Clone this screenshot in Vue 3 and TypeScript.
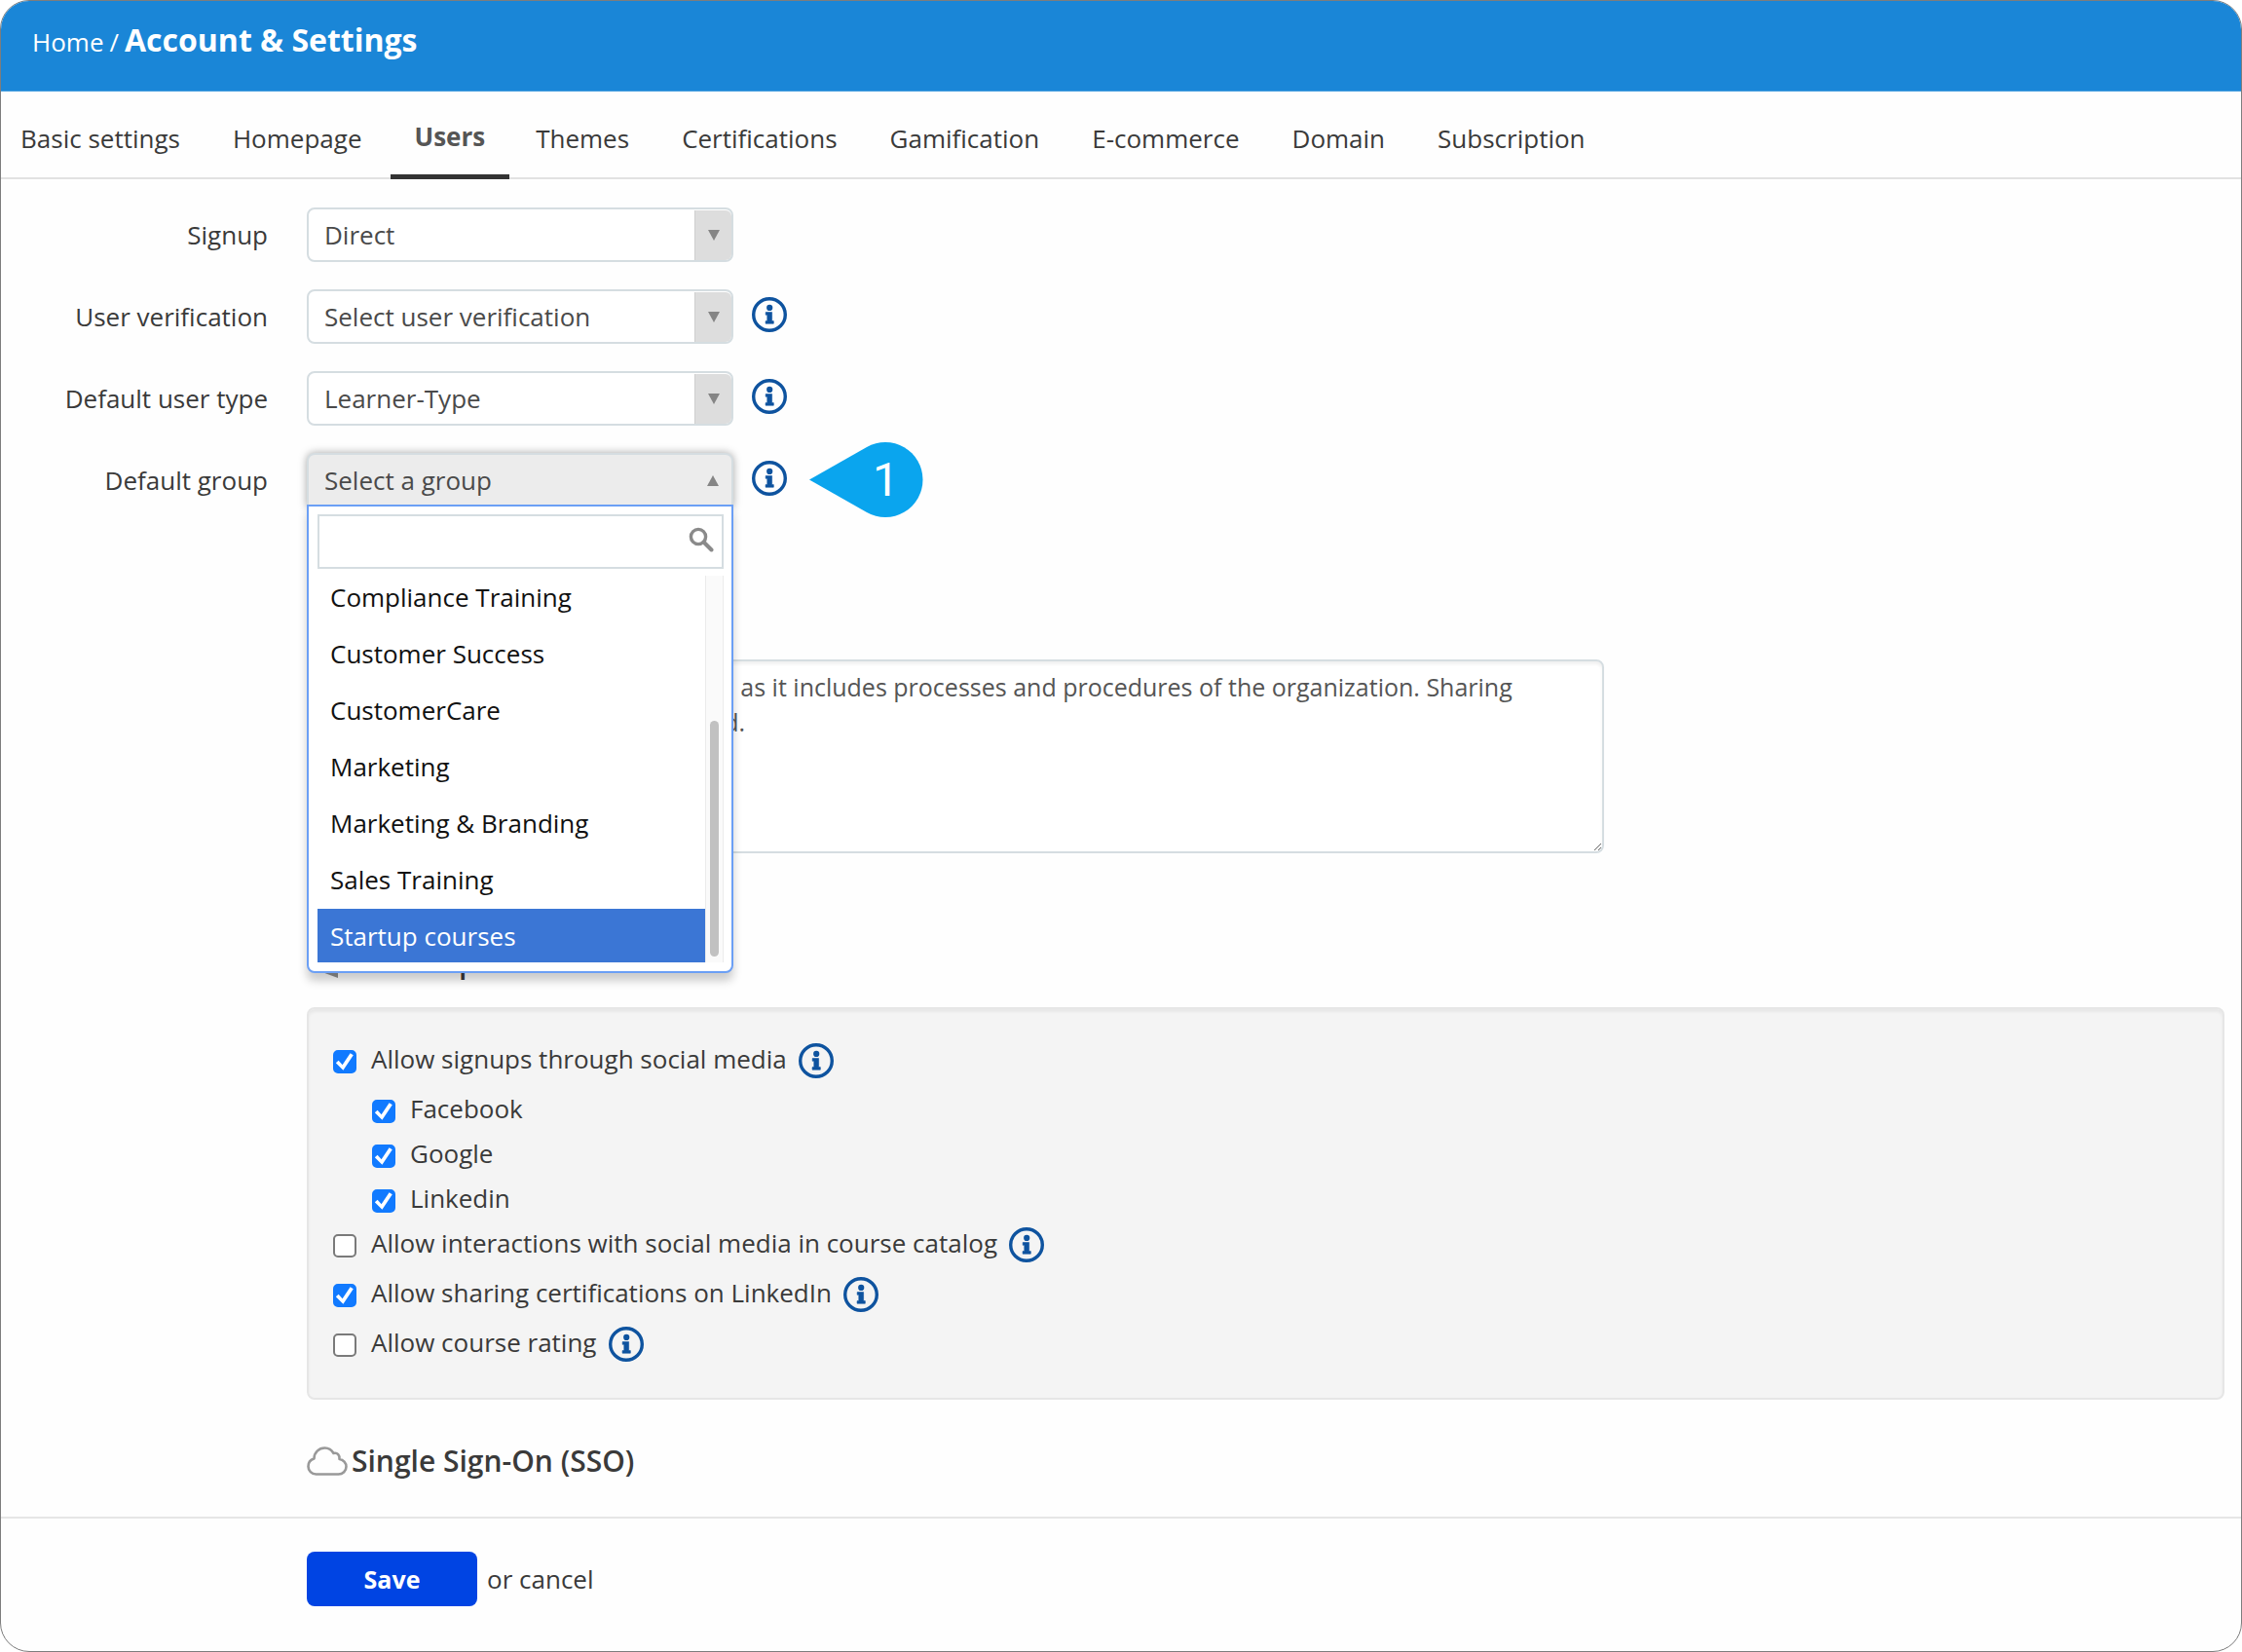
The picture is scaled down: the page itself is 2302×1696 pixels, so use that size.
<script setup lang="ts">
import { ref } from 'vue'

interface Tab { id: string; label: string }
interface Field { id: string; label: string; value: string; info: boolean }
interface Option { id: string; label: string; checked: boolean; nested?: boolean; info?: boolean }

const tabs: Tab[] = [
  { id: 'basic', label: 'Basic settings' },
  { id: 'homepage', label: 'Homepage' },
  { id: 'users', label: 'Users' },
  { id: 'themes', label: 'Themes' },
  { id: 'certifications', label: 'Certifications' },
  { id: 'gamification', label: 'Gamification' },
  { id: 'ecommerce', label: 'E-commerce' },
  { id: 'domain', label: 'Domain' },
  { id: 'subscription', label: 'Subscription' },
]
const activeTab = ref('users')

const fields: Field[] = [
  { id: 'signup', label: 'Signup', value: 'Direct', info: false },
  { id: 'verification', label: 'User verification', value: 'Select user verification', info: true },
  { id: 'user-type', label: 'Default user type', value: 'Learner-Type', info: true },
]

const groups: string[] = [
  'Compliance Training',
  'Customer Success',
  'CustomerCare',
  'Marketing',
  'Marketing & Branding',
  'Sales Training',
  'Startup courses',
]
const activeGroup = ref('Startup courses')
const search = ref('')

const terms = ref(
  'All information is strictly confidential as it includes processes and procedures of the organization. Sharing information with others is prohibited.',
)

const options = ref<Option[]>([
  { id: 'social', label: 'Allow signups through social media', checked: true, info: true },
  { id: 'facebook', label: 'Facebook', checked: true, nested: true },
  { id: 'google', label: 'Google', checked: true, nested: true },
  { id: 'linkedin', label: 'Linkedin', checked: true, nested: true },
  { id: 'catalog', label: 'Allow interactions with social media in course catalog', checked: false, info: true },
  { id: 'sharing', label: 'Allow sharing certifications on LinkedIn', checked: true, info: true },
  { id: 'rating', label: 'Allow course rating', checked: false, info: true },
])
</script>

<template>
  <svg class="defs" aria-hidden="true">
    <symbol id="icon-info" viewBox="0 0 36 36">
      <circle cx="18" cy="18" r="16.3" fill="none" stroke="#0e539f" stroke-width="3.4" />
      <circle cx="18.2" cy="10.9" r="3.1" fill="#0e539f" />
      <path d="M14.2 15.6h6.4v9h1.7v2.6h-8.2v-2.6h1.7v-6.3h-1.6z" fill="#0e539f" stroke="#0e539f" stroke-width=".6" stroke-linejoin="round" />
    </symbol>
  </svg>

  <div class="window">
    <header class="bar">
      <a class="crumb" href="#">Home</a>
      <span class="crumb">/</span>
      <h1>Account &amp; Settings</h1>
    </header>

    <nav class="tabs">
      <a
        v-for="tab in tabs"
        :key="tab.id"
        href="#"
        class="tab"
        :class="{ active: tab.id === activeTab }"
        @click.prevent="activeTab = tab.id"
      >{{ tab.label }}</a>
    </nav>

    <main class="form">
      <div v-for="field in fields" :key="field.id" class="row">
        <label class="row-label" :for="field.id">{{ field.label }}</label>
        <div class="picker">
          <select :id="field.id">
            <option>{{ field.value }}</option>
          </select>
          <span class="picker-arrow"><svg width="12" height="11" viewBox="0 0 12 11"><path d="M0 0h12L6 11z" fill="#858585" /></svg></span>
        </div>
        <svg v-if="field.info" class="info"><use href="#icon-info" /></svg>
      </div>

      <div class="row">
        <label class="row-label" for="group">Default group</label>
        <div class="picker">
          <button id="group" type="button" class="picker-open" aria-haspopup="listbox" aria-expanded="true">
            Select a group
            <svg width="12" height="11" viewBox="0 0 12 11"><path d="M0 11h12L6 0z" fill="#858585" /></svg>
          </button>
          <div class="dropdown">
            <div class="search">
              <input v-model="search" type="text" aria-label="Search groups">
              <svg width="26" height="26" viewBox="0 0 26 26" fill="none" stroke="#8a8a8a">
                <circle cx="10" cy="10" r="7.6" stroke-width="3.4" />
                <path d="M15.5 15.5l8 8" stroke-width="4" stroke-linecap="round" />
              </svg>
            </div>
            <div class="results">
              <ul role="listbox">
                <li
                  v-for="group in groups"
                  :key="group"
                  role="option"
                  :aria-selected="group === activeGroup"
                  :class="{ active: group === activeGroup }"
                  @click="activeGroup = group"
                >{{ group }}</li>
              </ul>
              <div class="track"><div class="thumb" /></div>
            </div>
          </div>
        </div>
        <div class="after">
          <svg class="info"><use href="#icon-info" /></svg>
          <div class="callout">
            <svg width="117" height="78" viewBox="0 0 117 78"><path d="M0 38.5L59 5A38.5 38.5 0 1 1 59 72z" fill="#0aa5ee" /></svg>
            <span>1</span>
          </div>
        </div>
      </div>

      <div class="content">
        <textarea v-model="terms" aria-label="Terms of service" />

        <h2 class="social-title">
          <svg width="42" height="32" viewBox="0 0 42 32"><path d="M2 12v9l30 11V0z" fill="#8f8f8f" /></svg>
          Social options
        </h2>

        <section class="panel">
          <div
            v-for="option in options"
            :key="option.id"
            class="option"
            :class="{ nested: option.nested, spaced: option.info }"
          >
            <input :id="option.id" v-model="option.checked" type="checkbox">
            <label :for="option.id">{{ option.label }}</label>
            <svg v-if="option.info" class="info"><use href="#icon-info" /></svg>
          </div>
        </section>

        <h2>
          <svg width="42" height="30" viewBox="0 0 42 30" fill="none" stroke="#999" stroke-width="2.6" stroke-linejoin="round">
            <path d="M9.500 28.500C5 28.500 1.500 25 1.500 20.500C1.500 16.500 4 13.500 7.500 12.500C7.500 6 12.500 1.500 18.500 1.500C22.500 1.500 25.500 3.500 27.500 7C31.500 6 34 9 33.500 13C37.500 13.500 40.500 16.800 40.500 20.800C40.500 25 37 28.500 32.500 28.500Z" />
          </svg>
          Single Sign-On (SSO)
        </h2>
      </div>
    </main>

    <footer class="actions">
      <button type="button" class="save">Save</button>
      <span>or <a href="#">cancel</a></span>
    </footer>
  </div>
</template>

<style>
body {
  margin: 0;
  background: #fff;
}
</style>

<style scoped>
* {
  box-sizing: border-box;
}

.defs {
  position: absolute;
  width: 0;
  height: 0;
}

.window {
  display: flex;
  flex-direction: column;
  min-height: 100vh;
  border: 1px solid #7d7d7d;
  border-radius: 30px;
  overflow: hidden;
  background: #fefefe;
  color: #3a3a3a;
  font: 26px/36px "Open Sans", "Noto Sans", sans-serif;
}

a {
  color: inherit;
  text-decoration: none;
}

.bar {
  display: flex;
  align-items: baseline;
  gap: 6px;
  height: 93px;
  padding: 17px 32px 0;
  border-bottom: 1px solid #4aa0df;
  background: #1a86d7;
  color: #fff;
}

h1 {
  margin: 0;
  font-size: 32px;
  line-height: 46px;
  font-weight: 700;
}

.tabs {
  display: flex;
  height: 90px;
  border-bottom: 2px solid #e2e2e2;
}

.tab {
  height: 90px;
  padding: 30px 27px 0;
}

.tab:first-child {
  padding-left: 20px;
}

.tab.active {
  margin-left: 2px;
  padding: 28px 25px 0;
  border-bottom: 5px solid #333;
  color: #555;
  font-weight: 700;
}

.form {
  display: flex;
  flex-direction: column;
  gap: 28px;
  padding: 29px 17px 0 0;
}

.row {
  display: flex;
  align-items: center;
}

.row-label {
  width: 274px;
  margin-right: 40px;
  text-align: right;
}

.info {
  flex: none;
  width: 36px;
  height: 36px;
}

.row .info {
  margin: 0 0 4px 19px;
}

.picker {
  position: relative;
  width: 438px;
  height: 56px;
}

select,
.picker-open {
  width: 100%;
  height: 100%;
  padding: 0 50px 0 16px;
  border: 2px solid #d5dde1;
  border-radius: 8px;
  background: #fff;
  color: #4a4a4a;
  font: inherit;
  appearance: none;
}

.picker-arrow {
  position: absolute;
  top: 3px;
  right: 2px;
  bottom: 2px;
  display: flex;
  align-items: center;
  justify-content: center;
  width: 38px;
  border-left: 1px solid #cfcfcf;
  border-radius: 0 6px 6px 0;
  background: #ddd;
  pointer-events: none;
}

.picker-open {
  display: flex;
  align-items: center;
  justify-content: space-between;
  padding-right: 13px;
  border-radius: 8px 8px 0 0;
  background: #ececec;
  box-shadow: 0 0 8px rgba(0, 0, 0, 0.35);
  text-align: left;
}

.dropdown {
  position: absolute;
  z-index: 2;
  top: 53px;
  left: 0;
  right: 0;
  padding: 8px 8px 9px 9px;
  border: 2px solid #6b9ff5;
  border-radius: 0 0 8px 8px;
  background: #fff;
  box-shadow: 0 8px 10px rgba(0, 0, 0, 0.2);
}

.search {
  display: flex;
  align-items: center;
  height: 56px;
  padding: 0 8px 4px 0;
  border: 2px solid #d5dde1;
}

.search input {
  flex: 1;
  min-width: 0;
  height: 100%;
  padding: 0 10px;
  border: 0;
  outline: 0;
  background: transparent;
  font: inherit;
}

.results {
  display: flex;
  height: 397px;
  margin-top: 7px;
}

ul {
  display: flex;
  flex: 1;
  flex-direction: column;
  justify-content: flex-end;
  gap: 3px;
  margin: 0;
  padding: 0;
  overflow: hidden;
  list-style: none;
}

li {
  flex: none;
  height: 55px;
  padding: 0 13px;
  color: #111;
  line-height: 56px;
}

li.active {
  background: #3b76d5;
  color: #fff;
}

.track {
  width: 19px;
  padding: 149px 4px 6px;
  border: solid #ebebeb;
  border-width: 0 1px;
  background: #fafafa;
}

.thumb {
  height: 100%;
  border-radius: 5px;
  background: #c1c1c1;
}

.after {
  position: relative;
  display: flex;
}

.callout {
  position: absolute;
  top: -19px;
  left: 78px;
  width: 117px;
  height: 78px;
}

.callout svg {
  display: block;
}

.callout span {
  position: absolute;
  inset: 0 0 0 40px;
  color: #fff;
  font: 48px/78px Roboto, sans-serif;
  text-align: center;
}

.content {
  display: flex;
  flex-direction: column;
  padding: 128px 0 0 314px;
}

textarea {
  width: 68%;
  max-width: 1332px;
  height: 199px;
  padding: 8px 12px;
  border: 2px solid #d5dde1;
  border-radius: 8px;
  background: #fff;
  box-shadow: inset 0 3px 3px rgba(0, 0, 0, 0.06);
  color: #555;
  font: 500 25px/36px "Open Sans", "Noto Sans", sans-serif;
}

h2 {
  display: flex;
  align-items: center;
  gap: 4px;
  margin: 0;
  font-size: 30px;
  line-height: 42px;
  font-weight: 600;
}

.social-title {
  margin: 91px 0 25px;
}

.panel {
  margin-bottom: 42px;
  padding: 28px 25px 29px;
  border: 2px solid #e6e6e6;
  border-radius: 8px;
  background: #f4f4f4;
  box-shadow: inset 0 3px 3px rgba(0, 0, 0, 0.05);
}

.option {
  display: flex;
  align-items: center;
  height: 46px;
}

.option.spaced {
  margin-bottom: 5px;
}

.option.nested {
  margin-left: 40px;
}

.option input {
  display: grid;
  width: 24px;
  height: 24px;
  margin: 6px 15px 0 0;
  border: 2px solid #7a7a7a;
  border-radius: 5px;
  background: #fff;
  appearance: none;
}

.option input:checked {
  border-color: #117aff;
  background: #117aff;
}

.option input:checked::before {
  content: "";
  background: #fff;
  clip-path: polygon(4% 56%, 18% 44%, 38% 66%, 78% 6%, 94% 16%, 42% 94%);
}

.option .info {
  margin: 4px 0 0 12px;
}

.actions {
  display: flex;
  align-items: center;
  gap: 10px;
  margin-top: 36px;
  padding: 34px 0 46px 314px;
  border-top: 2px solid #e6e6e6;
}

.save {
  width: 175px;
  height: 56px;
  padding: 0;
  border: 0;
  border-radius: 8px;
  background: #0044e3;
  color: #fff;
  font: inherit;
  font-size: 25px;
  font-weight: 700;
}
</style>
